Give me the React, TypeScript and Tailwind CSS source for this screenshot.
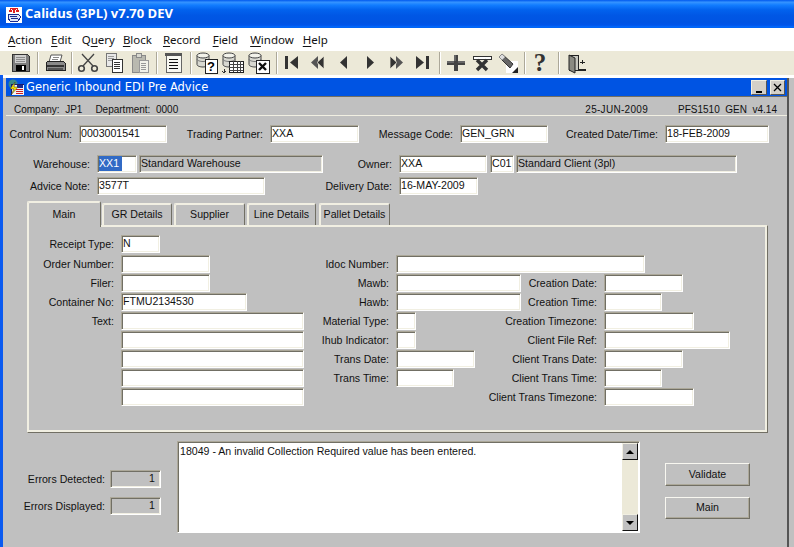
import React from "react";

const sans = "font-['Liberation_Sans',Arial,sans-serif]";

const Svg = ({ children }: { children: React.ReactNode }) => (
  <svg width="24" height="24" viewBox="0 0 24 24" shapeRendering="crispEdges">
    {children}
  </svg>
);

const Db = () => (
  <g shapeRendering="auto">
    <path d="M2 4.5v9c0 1.5 3 2.5 6 2.5s6-1 6-2.5v-9z" fill="#d8d8d0" stroke="#444" />
    <ellipse cx="8" cy="4.5" rx="6" ry="2.5" fill="#f2f2ea" stroke="#444" />
    <path d="M2 8c0 1.5 3 2.5 6 2.5s6-1 6-2.5" fill="none" stroke="#777" />
  </g>
);

const icons: Record<string, React.ReactNode> = {
  save: (
    <Svg>
      <path d="M4 3h15l2 2v15H4z" fill="#7d7d7d" stroke="#333" />
      <rect x="7" y="4" width="11" height="8" fill="#cfcfcf" />
      <path d="M8 6h9M8 8h9M8 10h9" stroke="#8c8c8c" />
      <rect x="8" y="14" width="10" height="6" fill="#000" />
      <rect x="14" y="15" width="2" height="4" fill="#fff" />
    </Svg>
  ),
  print: (
    <Svg>
      <path d="M8 4h11l-2 7H6z" fill="#fff" stroke="#555" shapeRendering="auto" />
      <path d="M10 6h6M9 8h6" stroke="#888" />
      <path d="M3 12l2-2h15l2 2v7H3z" fill="#8a8a8a" stroke="#222" />
      <rect x="4" y="14" width="17" height="2" fill="#333" />
      <rect x="5" y="17" width="15" height="2" fill="#555" />
    </Svg>
  ),
  cut: (
    <Svg>
      <g shapeRendering="auto" fill="none" stroke="#444">
        <path d="M6 3l11 12M18 3L7 15" strokeWidth="1.3" />
        <circle cx="5.5" cy="17.5" r="2.8" strokeWidth="1.6" />
        <circle cx="18.5" cy="17.5" r="2.8" strokeWidth="1.6" />
      </g>
    </Svg>
  ),
  copy: (
    <Svg>
      <rect x="4" y="2" width="10" height="13" fill="#e8e8e8" stroke="#777" />
      <path d="M6 5h6M6 7h6M6 9h6" stroke="#999" />
      <rect x="10" y="8" width="10" height="13" fill="#fff" stroke="#333" />
      <path d="M12 11h6M12 13h6M12 15h6M12 17h6" stroke="#333" />
    </Svg>
  ),
  paste: (
    <Svg>
      <rect x="4" y="4" width="13" height="17" fill="#b9b9b0" stroke="#8a8a8a" />
      <rect x="8" y="2" width="5" height="4" fill="#d8d8d0" stroke="#8a8a8a" />
      <rect x="11" y="9" width="9" height="12" fill="#f2f2ea" stroke="#999" />
      <path d="M13 12h5M13 14h5M13 16h5M13 18h5" stroke="#999" />
    </Svg>
  ),
  block: (
    <Svg>
      <rect x="5" y="3" width="15" height="18" fill="#f8f8f2" stroke="#666" />
      <rect x="4" y="2" width="17" height="3" fill="#555" />
      <path d="M8 8h9M8 11h9M8 14h9M8 17h9" stroke="#111" />
    </Svg>
  ),
  query: (
    <Svg>
      <Db />
      <rect x="10" y="8" width="12" height="14" fill="#fff" stroke="#222" />
      <text x="16" y="20" textAnchor="middle" fontSize="13" fontWeight="700" fontFamily="Liberation Sans" fill="#000">
        ?
      </text>
    </Svg>
  ),
  grid: (
    <Svg>
      <Db />
      <rect x="8" y="10" width="14" height="11" fill="#fff" stroke="#222" />
      <path d="M8 13h14M8 16h14M8 19h14M12 10v11M16 10v11M19 10v11" stroke="#444" />
      <path d="M3 18v4M1 20l2 2 2-2" stroke="#333" fill="none" />
    </Svg>
  ),
  dbx: (
    <Svg>
      <Db />
      <rect x="9" y="9" width="13" height="13" fill="#fff" stroke="#222" />
      <path d="M12 12l7 7M19 12l-7 7" stroke="#111" strokeWidth="2.4" shapeRendering="auto" />
    </Svg>
  ),
  first: (
    <Svg>
      <rect x="5" y="5" width="3" height="13" fill="#333" />
      <path d="M18 5v13l-8-6.5z" fill="#333" shapeRendering="auto" />
    </Svg>
  ),
  prevBlock: (
    <Svg>
      <path d="M12 5v13l-7-6.5z" fill="#555" shapeRendering="auto" />
      <path d="M18 5v13l-7-6.5z" fill="#333" stroke="#ece9d8" strokeWidth="0.8" shapeRendering="auto" />
    </Svg>
  ),
  prev: (
    <Svg>
      <path d="M15 5v13l-7-6.5z" fill="#333" shapeRendering="auto" />
    </Svg>
  ),
  next: (
    <Svg>
      <path d="M9 5v13l7-6.5z" fill="#333" shapeRendering="auto" />
    </Svg>
  ),
  nextBlock: (
    <Svg>
      <path d="M12 5v13l7-6.5z" fill="#555" shapeRendering="auto" />
      <path d="M6 5v13l7-6.5z" fill="#333" stroke="#ece9d8" strokeWidth="0.8" shapeRendering="auto" />
    </Svg>
  ),
  last: (
    <Svg>
      <path d="M6 5v13l8-6.5z" fill="#333" shapeRendering="auto" />
      <rect x="16" y="5" width="3" height="13" fill="#333" />
    </Svg>
  ),
  plus: (
    <Svg>
      <path d="M10 4h4v6h7v4h-7v6h-4v-6H3v-4h7z" fill="#444" />
      <path d="M10 4h2v6h-2zM3 10h7v2H3zM14 10h7v2h-7z" fill="#666" />
    </Svg>
  ),
  del: (
    <Svg>
      <rect x="3" y="5" width="18" height="3" fill="#fff" stroke="#333" />
      <path d="M7 9l10 10M17 9L7 19" stroke="#333" strokeWidth="3.4" shapeRendering="auto" />
    </Svg>
  ),
  clear: (
    <Svg>
      <rect x="10" y="10" width="12" height="12" fill="#fff" />
      <path d="M16 22l6-6v6z" fill="#222" shapeRendering="auto" />
      <path d="M3 6l3-3 11 10-3 4z" fill="#666" stroke="#333" shapeRendering="auto" />
      <path d="M3 6l3-3 3 3-3 3z" fill="#ddd" shapeRendering="auto" />
    </Svg>
  ),
  help: (
    <span className="block w-[24px] text-center text-[25px] leading-[24px] font-bold text-[#333] font-['Liberation_Serif',serif]">
      ?
    </span>
  ),
  exit: (
    <Svg>
      <path d="M5 4h9v15H5z" fill="#c8c8c0" stroke="#222" />
      <path d="M5 4l6 3v15l-6-3z" fill="#8a8a82" stroke="#222" shapeRendering="auto" />
      <path d="M14 19h8" stroke="#222" strokeWidth="2" />
      <path d="M16 11h5M18 9v4" stroke="#222" />
    </Svg>
  ),
};

const Btn = ({ name }: { name: string }) => (
  <div className="flex h-[24px] w-[26px] shrink-0 items-center justify-center">{icons[name]}</div>
);

const Sep = ({ className }: { className: string }) => (
  <div className={`h-[22px] w-[2px] shrink-0 border-l border-l-[#aca899] border-r border-r-white ${className}`} />
);

const Field = ({
  className,
  value,
  grey,
  right,
}: {
  className: string;
  value?: React.ReactNode;
  grey?: boolean;
  right?: boolean;
}) => (
  <div
    className={`flex h-[18px] shrink-0 items-center border border-t-[#aca899] border-l-[#aca899] border-r-white border-b-white pl-[1px] text-[10.6px] text-[#111] whitespace-pre shadow-[inset_1px_1px_0_#716f64,inset_-1px_-1px_0_#f1efe2] ${
      grey ? "bg-[#c0c0c0]" : "bg-white"
    } ${right ? "justify-end pr-[5px]" : ""} ${className}`}
  >
    {value}
  </div>
);

const Label = ({ className, children }: { className: string; children: React.ReactNode }) => (
  <div className={`shrink-0 pr-[7px] text-right text-[10.6px] leading-[18px] text-[#111] whitespace-nowrap ${className}`}>
    {children}
  </div>
);

const Row = ({ label, labelW, fieldW, value }: { label: string; labelW: string; fieldW: string; value?: string }) => (
  <div className="mb-[1px] flex h-[18px]">
    <Label className={labelW}>{label}</Label>
    <Field className={fieldW} value={value} />
  </div>
);

const Tab = ({ label, className, active }: { label: string; className: string; active?: boolean }) => (
  <div
    className={`flex shrink-0 items-center justify-center rounded-t-[2px] border border-t-[#f1efe2] border-l-[#f1efe2] border-r-[#716f64] border-b-0 bg-[#c0c0c0] text-[10.6px] text-[#111] shadow-[inset_1px_1px_0_#f1efe2] ${
      active ? "relative z-10 -mb-[2px] h-[26px]" : "h-[22px]"
    } ${className}`}
  >
    {label}
  </div>
);

const ScrollBtn = ({ up }: { up?: boolean }) => (
  <div className="flex h-[17px] w-[16px] items-center justify-center border border-t-[#f1efe2] border-l-[#f1efe2] border-r-[#111] border-b-[#111] bg-[#c0c0c0]">
    <div
      className={`h-0 w-0 border-x-[4px] border-x-transparent ${
        up ? "border-b-[4px] border-b-black" : "border-t-[4px] border-t-black"
      }`}
    />
  </div>
);

const Action = ({ label, className }: { label: string; className: string }) => (
  <div
    className={`flex w-[85px] items-center justify-center border border-t-[#f8f7f0] border-l-[#f8f7f0] border-r-[#716f64] border-b-[#716f64] bg-[#c0c0c0] text-[10.6px] text-[#111] shadow-[inset_-1px_-1px_0_#aca899] ${className}`}
  >
    {label}
  </div>
);

const Menu = ({ pre, u, post, className }: { pre?: string; u: string; post: string; className?: string }) => (
  <span className={className}>
    {pre}
    <span className="underline underline-offset-2">{u}</span>
    {post}
  </span>
);

const leftL = "w-[94px]";
const midL = "w-[80px]";
const rightL = "w-[125px]";

const App = () => {
  return (
    <div className={`flex h-[547px] w-[794px] flex-col overflow-hidden bg-white ${sans}`}>
      {/* main title bar */}
      <div className="flex h-[28px] shrink-0 items-center bg-[linear-gradient(180deg,#0058ee_0%,#3593ff_8%,#127dff_18%,#0262ee_35%,#0057e5_55%,#0054e3_80%,#0055eb_90%,#026afe_96%,#0062ef_100%)] pl-[6px]">
        <svg width="16" height="17" viewBox="0 0 16 17" shapeRendering="crispEdges">
          <rect x="0" y="1" width="16" height="16" fill="#fff" />
          <path d="M4 2h8v2H4zM3 4h3v2H3zM7 4h2v3H7zM10 4h3v2h-3z" fill="#e02020" />
          <path d="M5 3h1v1H5zM10 3h1v1h-1z" fill="#fff" />
          <path d="M2 8h10l2 2v2l-2 3H4l-2-3z" fill="#dfe6f7" stroke="#1a2a90" />
          <path d="M4 10h7M5 12h7" stroke="#1a2a90" />
        </svg>
        <div className="ml-[3px] font-['Open_Sans',sans-serif] text-[13px] font-bold text-white">
          Calidus (3PL) v7.70 DEV
        </div>
      </div>

      {/* menu */}
      <div className="flex h-[23px] shrink-0 items-center gap-[10px] bg-white pl-[8px] font-['Noto_Sans',sans-serif] text-[11.5px] text-[#111]">
        <Menu u="A" post="ction" />
        <Menu u="E" post="dit" className="-ml-[1px]" />
        <Menu pre="Q" u="u" post="ery" />
        <Menu u="B" post="lock" className="-ml-[2px]" />
        <Menu u="R" post="ecord" className="ml-[1px]" />
        <Menu u="F" post="ield" className="ml-[2px]" />
        <Menu u="W" post="indow" className="ml-[2px]" />
        <Menu u="H" post="elp" className="-ml-[1px]" />
      </div>

      {/* toolbar */}
      <div className="flex h-[24px] shrink-0 items-center bg-[#ece9d8] pl-[7px]">
        <Btn name="save" />
        <Sep className="ml-[4px] mr-[3px]" />
        <Btn name="print" />
        <Sep className="ml-[3px] mr-[2px]" />
        <Btn name="cut" />
        <Btn name="copy" />
        <Btn name="paste" />
        <Sep className="ml-[3px] mr-[2px]" />
        <Btn name="block" />
        <Sep className="ml-[4px] mr-[2px]" />
        <Btn name="query" />
        <Btn name="grid" />
        <Btn name="dbx" />
        <Sep className="ml-[4px] mr-[1px]" />
        <Btn name="first" />
        <Btn name="prevBlock" />
        <Btn name="prev" />
        <Btn name="next" />
        <Btn name="nextBlock" />
        <Btn name="last" />
        <Sep className="ml-[4px] mr-[2px]" />
        <Btn name="plus" />
        <Btn name="del" />
        <Btn name="clear" />
        <Sep className="ml-[3px] mr-[1px]" />
        <Btn name="help" />
        <Sep className="ml-[5px] mr-[3px]" />
        <Btn name="exit" />
      </div>

      {/* desktop area */}
      <div className="flex min-h-0 flex-1 flex-col border-l-[3px] border-l-[#0a5af0] bg-[#c0c0c0]">
        <div className="h-[3px] shrink-0 bg-white" />
        <div className="flex min-h-0 flex-1">
          <div className="ml-[3px] flex w-[783px] flex-col border-r-[2px] border-r-[#555]">
            {/* inner window title */}
            <div className="flex h-[18px] shrink-0 items-center bg-[#0054e3] pl-[2px] pr-[2px]">
              <svg width="16" height="16" viewBox="0 0 16 16" shapeRendering="crispEdges">
                <circle cx="5" cy="5" r="4.5" fill="#3a8a8a" shapeRendering="auto" />
                <rect x="3" y="5" width="13" height="11" fill="#f4f4f4" stroke="#1a1a6a" />
                <rect x="9" y="6" width="6" height="3" fill="#1a2a90" />
                <path d="M8 10h7M8 12h7M8 14h7" stroke="#d02020" />
                <path d="M7 3L2 10h4l-3 6 7-8H6z" fill="#f8e000" stroke="#333" strokeWidth="0.5" shapeRendering="auto" />
              </svg>
              <div className="ml-[2px] pt-[1px] font-['DejaVu_Sans',sans-serif] text-[11.5px] text-white">
                Generic Inbound EDI Pre Advice
              </div>
              <div className="ml-auto flex gap-[3px]">
                <div className="flex h-[15px] w-[16px] items-end justify-center border border-t-[#f1efe2] border-l-[#f1efe2] border-r-[#555] border-b-[#555] bg-[#d4d0c8] pb-[1px]">
                  <div className="h-[2px] w-[6px] bg-black" />
                </div>
                <div className="flex h-[15px] w-[15px] items-center justify-center border border-t-[#f1efe2] border-l-[#f1efe2] border-r-[#555] border-b-[#555] bg-[#d4d0c8]">
                  <svg width="9" height="9" viewBox="0 0 9 9">
                    <path d="M1 1l7 7M8 1L1 8" stroke="#000" strokeWidth="1.3" />
                  </svg>
                </div>
              </div>
            </div>

            {/* status strip */}
            <div className="flex h-[20px] shrink-0 items-end border-t border-t-[#716f64] border-b border-b-[#f1efe2] pl-[8px] pr-[10px] text-[10px] leading-[11px] text-[#111] whitespace-pre">
              <span>Company:  JP1</span>
              <span className="ml-[13px]">Department:  0000</span>
              <span className="ml-auto tracking-[0.3px]">25-JUN-2009</span>
              <span className="ml-[30px]">PFS1510  GEN  v4.14</span>
            </div>

            {/* header fields */}
            <div className="mt-[9px] flex h-[18px] shrink-0">
              <Label className="w-[73px]">Control Num:</Label>
              <Field className="w-[88px]" value="0003001541" />
              <Label className="w-[103px]">Trading Partner:</Label>
              <Field className="w-[89px]" value="XXA" />
              <Label className="w-[101px]">Message Code:</Label>
              <Field className="w-[88px]" value="GEN_GRN" />
              <Label className="w-[117px]">Created Date/Time:</Label>
              <Field className="w-[104px]" value="18-FEB-2009" />
            </div>
            <div className="mt-[11px] flex h-[19px] shrink-0 items-center">
              <Label className="w-[91px]">Warehouse:</Label>
              <Field
                className="w-[40px]"
                value={<span className="bg-[#316ac5] pr-[3px] text-white">XX1</span>}
              />
              <Field className="ml-[2px] w-[184px]" grey value="Standard Warehouse" />
              <Label className="w-[76px]">Owner:</Label>
              <Field className="w-[88px]" value="XXA" />
              <Field className="ml-[3px] w-[24px]" value="C01" />
              <Field className="ml-[2px] w-[221px]" grey value="Standard Client (3pl)" />
            </div>
            <div className="mt-[4px] flex h-[18px] shrink-0">
              <Label className="w-[91px]">Advice Note:</Label>
              <Field className="w-[168px]" value="3577T" />
              <Label className="w-[134px]">Delivery Date:</Label>
              <Field className="w-[79px]" value="16-MAY-2009" />
            </div>

            {/* tabs */}
            <div className="ml-[21px] mt-[6px] flex h-[24px] shrink-0 items-end">
              <Tab label="Main" active className="w-[74px]" />
              <Tab label="GR Details" className="ml-[1px] w-[70px]" />
              <Tab label="Supplier" className="ml-[2px] w-[71px]" />
              <Tab label="Line Details" className="ml-[2px] w-[69px]" />
              <Tab label="Pallet Details" className="ml-[3px] w-[71px]" />
            </div>
            <div className="ml-[21px] flex h-[208px] w-[741px] shrink-0 border border-t-[#f1efe2] border-l-[#f1efe2] border-r-[#716f64] border-b-[#716f64] pt-[9px] shadow-[inset_1px_1px_0_#f1efe2,inset_-2px_-2px_0_#f1efe2]">
              <div className="flex w-[288px] shrink-0 flex-col">
                <div className="-ml-px flex flex-col">
                  <Row label="Receipt Type:" labelW={leftL} fieldW="w-[39px]" value="N" />
                  <div className="h-[1px]" />
                  <Row label="Order Number:" labelW={leftL} fieldW="w-[89px]" />
                  <Row label="Filer:" labelW={leftL} fieldW="w-[89px]" />
                  <Row label="Container No:" labelW={leftL} fieldW="w-[126px]" value="FTMU2134530" />
                  <Row label="Text:" labelW={leftL} fieldW="w-[183px]" />
                  <Row label="" labelW={leftL} fieldW="w-[183px]" />
                  <Row label="" labelW={leftL} fieldW="w-[183px]" />
                  <Row label="" labelW={leftL} fieldW="w-[183px]" />
                  <Row label="" labelW={leftL} fieldW="w-[183px]" />
                </div>
              </div>
              <div className="flex flex-col pt-[20px]">
                <Row label="Idoc Number:" labelW={midL} fieldW="w-[249px]" />
                <div className="flex">
                  <div className="flex w-[163px] shrink-0 flex-col">
                    <Row label="Mawb:" labelW={midL} fieldW="w-[125px]" />
                    <Row label="Hawb:" labelW={midL} fieldW="w-[125px]" />
                    <Row label="Material Type:" labelW={midL} fieldW="w-[20px]" />
                    <Row label="Ihub Indicator:" labelW={midL} fieldW="w-[20px]" />
                    <Row label="Trans Date:" labelW={midL} fieldW="w-[79px]" />
                    <Row label="Trans Time:" labelW={midL} fieldW="w-[58px]" />
                  </div>
                  <div className="flex flex-col">
                    <Row label="Creation Date:" labelW={rightL} fieldW="w-[79px]" />
                    <Row label="Creation Time:" labelW={rightL} fieldW="w-[58px]" />
                    <Row label="Creation Timezone:" labelW={rightL} fieldW="w-[90px]" />
                    <Row label="Client File Ref:" labelW={rightL} fieldW="w-[126px]" />
                    <Row label="Client Trans Date:" labelW={rightL} fieldW="w-[79px]" />
                    <Row label="Client Trans Time:" labelW={rightL} fieldW="w-[58px]" />
                    <Row label="Client Trans Timezone:" labelW={rightL} fieldW="w-[90px]" />
                  </div>
                </div>
              </div>
            </div>

            {/* errors */}
            <div className="mt-[8px] flex shrink-0">
              <div className="flex w-[171px] shrink-0 flex-col gap-[9px] pt-[29px]">
                <div className="flex h-[18px]">
                  <Label className="w-[104px] !pr-[5px]">Errors Detected:</Label>
                  <Field className="w-[51px]" grey right value="1" />
                </div>
                <div className="flex h-[18px]">
                  <Label className="w-[104px] !pr-[5px]">Errors Displayed:</Label>
                  <Field className="w-[51px]" grey right value="1" />
                </div>
              </div>
              <div className="flex h-[92px] w-[463px] shrink-0 border border-t-[#aca899] border-l-[#aca899] border-r-white border-b-white bg-white shadow-[inset_1px_1px_0_#716f64]">
                <div className="flex-1 pl-[2px] pt-[2px] text-[10.6px] leading-[14px] text-[#111]">
                  18049 - An invalid Collection Required value has been entered.
                </div>
                <div className="mr-[1px] mt-[1px] flex h-[88px] w-[16px] flex-col bg-[#ece9d8]">
                  <ScrollBtn up />
                  <div className="flex-1" />
                  <ScrollBtn />
                </div>
              </div>
              <div className="ml-[25px] flex shrink-0 flex-col gap-[11px] pt-[22px]">
                <Action label="Validate" className="h-[23px]" />
                <Action label="Main" className="h-[22px]" />
              </div>
            </div>
          </div>
        </div>
      </div>
    </div>
  );
};

export default App;
